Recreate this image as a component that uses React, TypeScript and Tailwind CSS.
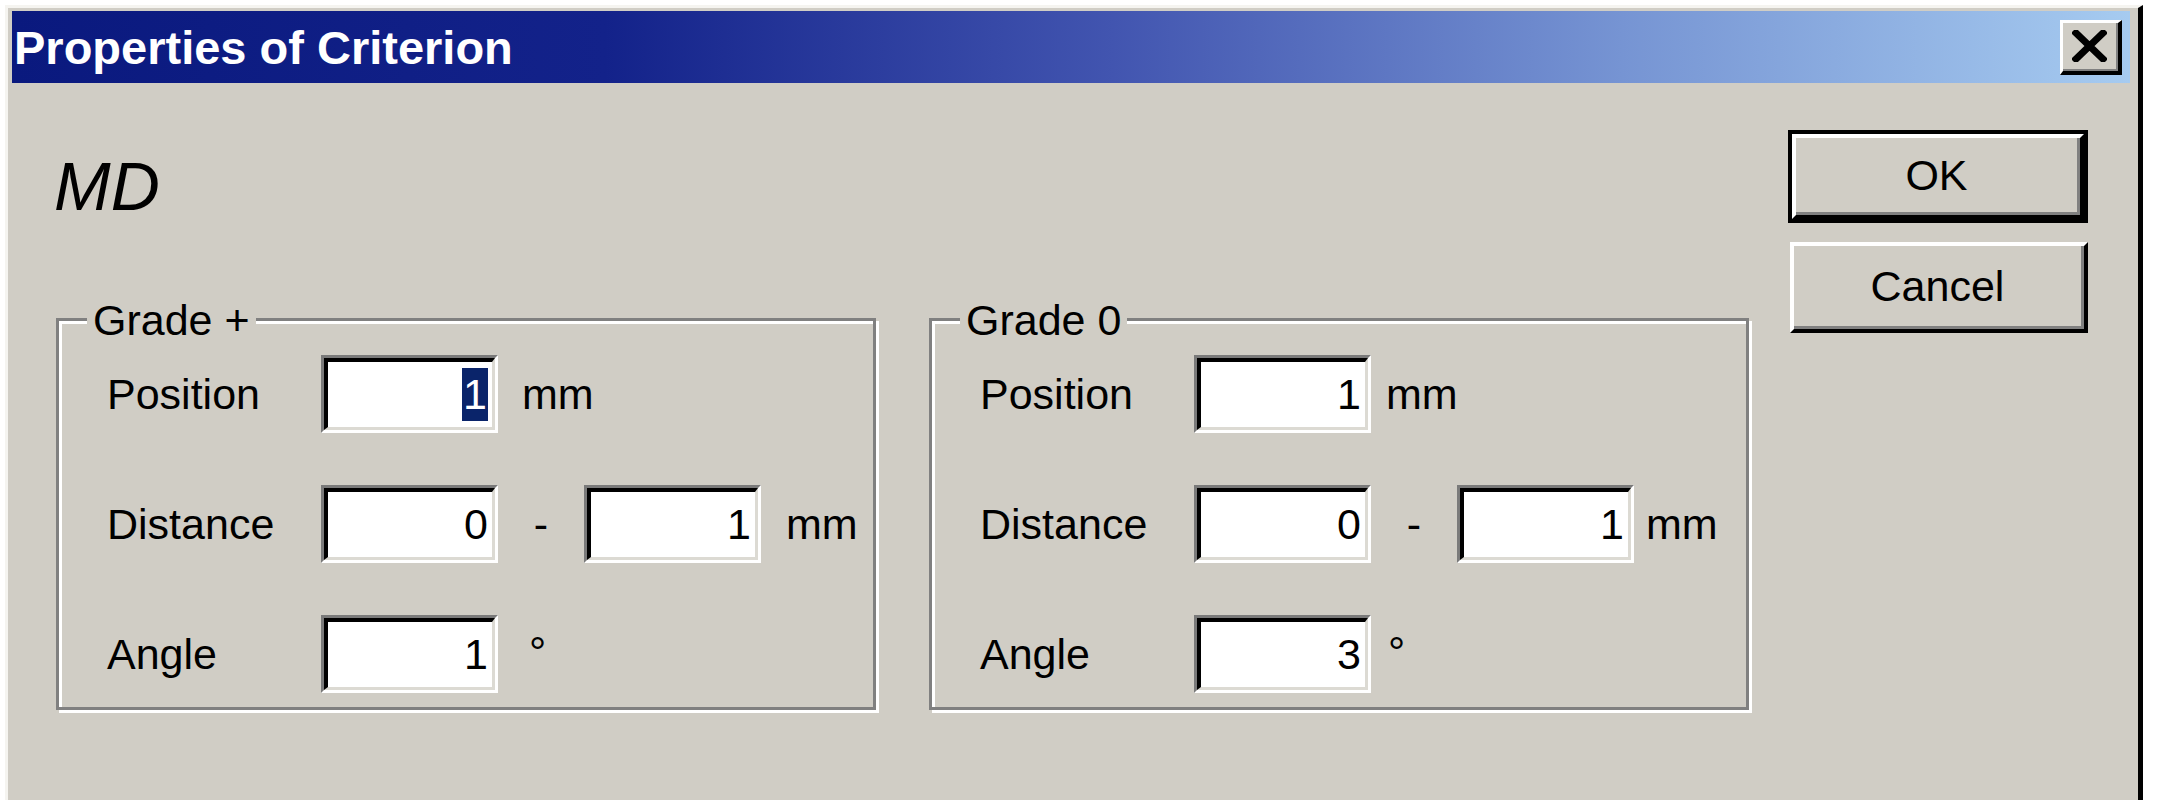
import type { ReactNode } from 'react'

// Classic Win9x/2000 dialog: "Properties of Criterion"

function Field({ value, selected = false }: { value: string; selected?: boolean }) {
  return (
    <div className="w-[177px] h-[78px] border-t-[3px] border-l-[3px] border-b-[3px] border-r-[3px] border-t-[#7a7a7a] border-l-[#7a7a7a] border-b-white border-r-white">
      <div className="h-full flex items-center justify-end pr-[4px] bg-white border-t-[4px] border-l-[4px] border-b-[3px] border-r-[3px] border-t-black border-l-black border-b-[#dcdad3] border-r-[#dcdad3]">
        <span className={selected ? 'leading-[1.25] px-[1px] bg-[#0a246a] text-white' : 'leading-[1.25]'}>{value}</span>
      </div>
    </div>
  )
}

function Row({ label, children }: { label: string; children: ReactNode }) {
  return (
    <div className="flex items-center h-[78px]">
      <span className="w-[214px] leading-none">{label}</span>
      {children}
    </div>
  )
}

interface GroupProps {
  title: string
  position: string
  from: string
  to: string
  angle: string
  selectPosition?: boolean
  unitGap: string
  rangeUnitGap: string
  degreeGap: string
}

function GroupBox({ title, position, from, to, angle, selectPosition, unitGap, rangeUnitGap, degreeGap }: GroupProps) {
  return (
    <div className="relative w-[820px] h-[392px] border-[3px] border-[#808080] shadow-[inset_3px_3px_0_#fff,3px_3px_0_#fff]">
      <span className="absolute left-[28px] top-[-22px] px-[6px] leading-none bg-[#d0cdc5]">{title}</span>
      <div className="flex flex-col gap-[52px] pt-[34px] pl-[48px]">
        <Row label="Position">
          <Field value={position} selected={selectPosition} />
          <span className={`leading-none ${unitGap}`}>mm</span>
        </Row>
        <Row label="Distance">
          <Field value={from} />
          <span className="w-[86px] text-center leading-none">-</span>
          <Field value={to} />
          <span className={`leading-none ${rangeUnitGap}`}>mm</span>
        </Row>
        <Row label="Angle">
          <Field value={angle} />
          <span className={`leading-none self-start mt-[16px] ${degreeGap}`}>°</span>
        </Row>
      </div>
    </div>
  )
}

function WinButton({ label, isDefault = false }: { label: string; isDefault?: boolean }) {
  const face = (
    <div className="h-full border-t-[4px] border-l-[4px] border-b-[4px] border-r-[4px] border-t-white border-l-white border-b-black border-r-black">
      <div className="h-full flex items-center justify-center leading-none bg-[#d0cdc5] border-b-[3px] border-r-[3px] border-b-[#808080] border-r-[#808080]">
        {label}
      </div>
    </div>
  )
  if (isDefault) {
    return <div className="w-[300px] h-[93px] border-[4px] border-black">{face}</div>
  }
  return <div className="w-[298px] h-[91px] ml-[2px]">{face}</div>
}

export default function App() {
  return (
    <div className="w-[2160px] h-[800px] overflow-hidden bg-white pt-[5px] pl-[5px] font-['Liberation_Sans',Arial,sans-serif] text-black text-[43px]">
      <div className="w-[2138px] h-[900px] bg-[#d0cdc5] pt-[3px] pl-[4px] pr-[8px] border-t-[3px] border-l-[3px] border-r-[5px] border-t-[#f5f4f0] border-l-[#f5f4f0] border-r-black">
        {/* caption */}
        <div className="h-[72px] flex items-center justify-between pl-[2px] pr-[8px] bg-[linear-gradient(to_right,#0a197e_0%,#13228a_28%,#4255b0_52%,#7694d3_76%,#a6cbf0_100%)]">
          <span className="text-white font-bold text-[47px] leading-none">Properties of Criterion</span>
          <div className="w-[62px] h-[55px] bg-[#d0cdc5] border-t-[3px] border-l-[3px] border-b-[4px] border-r-[4px] border-t-white border-l-white border-b-black border-r-black">
            <div className="h-full flex items-center justify-center border-b-[2px] border-r-[2px] border-b-[#808080] border-r-[#808080]">
              <svg width="35" height="32" viewBox="0 0 35 32">
                <path d="M4 3 L31 29 M31 3 L4 29" stroke="#000" strokeWidth="7" strokeLinecap="square" />
              </svg>
            </div>
          </div>
        </div>

        <div className="flex">
          <div className="flex flex-col">
            <div className="ml-[42px] mt-[69px] text-[68px] leading-none italic">MD</div>
            <div className="flex gap-[53px] ml-[44px] mt-[98px]">
              <GroupBox
                title="Grade +"
                position="1"
                from="0"
                to="1"
                angle="1"
                selectPosition
                unitGap="ml-[24px]"
                rangeUnitGap="ml-[25px]"
                degreeGap="ml-[31px]"
              />
              <GroupBox
                title="Grade 0"
                position="1"
                from="0"
                to="1"
                angle="3"
                unitGap="ml-[15px]"
                rangeUnitGap="ml-[12px]"
                degreeGap="ml-[17px]"
              />
            </div>
          </div>
          <div className="flex flex-col gap-[19px] ml-[39px] mt-[47px]">
            <WinButton label="OK" isDefault />
            <WinButton label="Cancel" />
          </div>
        </div>
      </div>
    </div>
  )
}
